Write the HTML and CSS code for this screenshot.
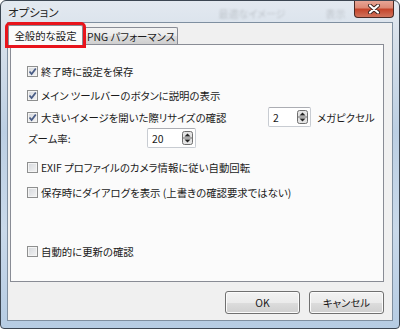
FILE: index.html
```html
<!DOCTYPE html>
<html>
<head>
  <title>オプション</title>
  <link rel="stylesheet" href="styles.css">
</head>
<body>
  <div class="window">
    <div class="titlebar">
      <span class="title">オプション</span>
      <span class="behind">最適なイメージ</span>
      <span class="behind behind-2">表示</span>
      <div class="close">
        <svg width="14" height="10" viewBox="0 0 14 10">
          <path d="M3 1.5 L11 8.5 M11 1.5 L3 8.5" stroke="#3b2420" stroke-width="4" stroke-linecap="round"/>
          <path d="M3 1.5 L11 8.5 M11 1.5 L3 8.5" stroke="#ffffff" stroke-width="2.2" stroke-linecap="round"/>
        </svg>
      </div>
    </div>
    <div class="frame-body">
      <div class="client">
        <div class="tabs">
          <div class="tab active">全般的な設定</div>
          <div class="tab">PNG パフォーマンス</div>
        </div>
        <div class="panel">
          <div class="row row-1">
            <span class="cb checked"><svg width="9" height="9" viewBox="0 0 9 9"><path d="M1.5 4.5 L3.6 7 L7.8 1.5" fill="none" stroke="#4a5d86" stroke-width="1.8"/></svg></span>
            <span class="label">終了時に設定を保存</span>
          </div>
          <div class="row row-2">
            <span class="cb checked"><svg width="9" height="9" viewBox="0 0 9 9"><path d="M1.5 4.5 L3.6 7 L7.8 1.5" fill="none" stroke="#4a5d86" stroke-width="1.8"/></svg></span>
            <span class="label">メイン ツールバーのボタンに説明の表示</span>
          </div>
          <div class="row row-3">
            <span class="cb checked"><svg width="9" height="9" viewBox="0 0 9 9"><path d="M1.5 4.5 L3.6 7 L7.8 1.5" fill="none" stroke="#4a5d86" stroke-width="1.8"/></svg></span>
            <span class="label wide">大きいイメージを開いた際リサイズの確認</span>
            <div class="spin spin-small">
              <span class="value">2</span>
              <span class="arrows">
                <svg width="11" height="14" viewBox="0 0 11 14">
                  <rect x="0.5" y="0.5" width="10" height="13" rx="2" fill="#e4e4e4" stroke="#6f6f6f"/>
                  <path d="M1 7 H10" stroke="#6f6f6f"/>
                  <path d="M2.5 5.5 L5.5 2.5 L8.5 5.5 Z" fill="#222"/>
                  <path d="M2.5 8.5 L5.5 11.5 L8.5 8.5 Z" fill="#222"/>
                </svg>
              </span>
            </div>
            <span class="unit">メガピクセル</span>
          </div>
          <div class="row row-zoom">
            <span class="label zoom-label">ズーム率:</span>
            <div class="spin spin-large">
              <span class="value">20</span>
              <span class="arrows">
                <svg width="11" height="14" viewBox="0 0 11 14">
                  <rect x="0.5" y="0.5" width="10" height="13" rx="2" fill="#e4e4e4" stroke="#6f6f6f"/>
                  <path d="M1 7 H10" stroke="#6f6f6f"/>
                  <path d="M2.5 5.5 L5.5 2.5 L8.5 5.5 Z" fill="#222"/>
                  <path d="M2.5 8.5 L5.5 11.5 L8.5 8.5 Z" fill="#222"/>
                </svg>
              </span>
            </div>
          </div>
          <div class="row row-exif">
            <span class="cb"></span>
            <span class="label">EXIF プロファイルのカメラ情報に従い自動回転</span>
          </div>
          <div class="row row-save">
            <span class="cb"></span>
            <span class="label">保存時にダイアログを表示 (上書きの確認要求ではない)</span>
          </div>
          <div class="row row-auto">
            <span class="cb"></span>
            <span class="label">自動的に更新の確認</span>
          </div>
        </div>
        <div class="buttons">
          <button class="btn">OK</button>
          <button class="btn">キャンセル</button>
        </div>
      </div>
    </div>
  </div>
</body>
</html>
```

FILE: styles.css
```css
body {
  margin: 0;
  font-family: "Noto Sans CJK JP", sans-serif;
  font-feature-settings: "palt";
  font-size: 10.4px;
  color: #1a1a1a;
  background-color: #ffffff;
}

.window {
  width: 398px;
  height: 327px;
  border: 1px solid #3c4652;
  border-radius: 6px 6px 4px 4px;
  background: linear-gradient(to bottom, #e3e9f0 0%, #d7e0ea 12%, #bccfe3 40%, #c9d9ea 70%, #b6cce3 100%);
  overflow: hidden;
}

.titlebar {
  height: 21px;
  display: flex;
  align-items: flex-start;
  white-space: nowrap;
}

.title {
  flex-shrink: 0;
  margin-left: 7px;
  margin-top: 3px;
  font-size: 11.5px;
  color: #222222;
  text-shadow: 0 0 6px #ffffff;
}

.behind {
  flex-shrink: 0;
  margin-left: 160px;
  margin-top: 5px;
  font-size: 10px;
  color: rgba(40, 40, 40, 0.18);
  filter: blur(1px);
}

.behind-2 {
  margin-left: 40px;
}

.close {
  flex-shrink: 0;
  margin-left: auto;
  margin-right: 5px;
  margin-top: -1px;
  width: 40px;
  height: 18px;
  box-sizing: border-box;
  border: 1px solid #4b2a24;
  border-top: none;
  border-radius: 0 0 4px 4px;
  background: linear-gradient(to bottom, #e9a99a 0%, #dc8a76 45%, #c5452b 55%, #d0735c 100%);
  display: flex;
  align-items: center;
  justify-content: center;
}

.frame-body {
  padding: 0 6px;
}

.client {
  height: 297px;
  border: 1px solid #7f8fa0;
  background-color: #f0f0f0;
  padding: 0 8px 0 2px;
  display: flex;
  flex-direction: column;
}

.tabs {
  display: flex;
  align-items: flex-end;
  height: 22px;
  margin-bottom: -1px;
  position: relative;
  z-index: 1;
  white-space: nowrap;
}

.tab {
  flex-shrink: 0;
  box-sizing: border-box;
  height: 17px;
  padding: 0 4px;
  border: 1px solid #898c95;
  border-bottom: none;
  border-radius: 2px 2px 0 0;
  background: linear-gradient(to bottom, #f3f3f3 0%, #ebebeb 50%, #dddddd 51%, #cfcfcf 100%);
  display: flex;
  align-items: center;
  margin-bottom: 1px;
}

.tab.active {
  height: 20px;
  width: 75px;
  margin-left: -2px;
  margin-right: -1px;
  margin-bottom: 0;
  justify-content: center;
  background: #fbfbfb;
  outline: 3px solid #e8141c;
  position: relative;
  z-index: 2;
}

.tab:not(.active) {
  width: 96px;
}

.panel {
  box-sizing: border-box;
  height: 238px;
  border: 1px solid #898c95;
  background-color: #fbfbfb;
  padding: 16px 0 0 16px;
}

.row {
  display: flex;
  align-items: center;
  height: 20px;
  white-space: nowrap;
}

.row-2 { margin-top: 4px; }
.row-3 { margin-top: 2px; }
.row-zoom { margin-top: 1px; }
.row-exif { margin-top: 9px; }
.row-save { margin-top: 5px; }
.row-auto { margin-top: 39px; }

.cb {
  box-sizing: border-box;
  width: 11px;
  height: 11px;
  border: 1px solid #8e8f8f;
  background: linear-gradient(135deg, #d4d7dc 0%, #f4f4f4 100%);
  box-shadow: inset 0 0 0 1px #f4f4f4;
  display: flex;
  align-items: center;
  justify-content: center;
  margin-right: 3px;
  flex-shrink: 0;
}

.cb svg {
  display: block;
}

.wide {
  width: 227px;
}

.zoom-label {
  width: 119px;
  margin-left: 1px;
}

.spin {
  box-sizing: border-box;
  height: 20px;
  border: 1px solid #c8ccd2;
  border-top-color: #abadb3;
  border-radius: 2px;
  background-color: #ffffff;
  display: flex;
  align-items: center;
  padding-left: 4px;
}

.spin-small { width: 43px; }
.spin-large { width: 49px; }

.spin .value {
  flex: 1;
}

.arrows {
  width: 11px;
  height: 14px;
  margin-right: 2px;
}

.arrows svg {
  display: block;
}

.unit {
  margin-left: 6px;
}

.buttons {
  display: flex;
  justify-content: flex-end;
  gap: 9px;
  margin-top: 9px;
}

.btn {
  width: 75px;
  height: 23px;
  border: 1px solid #707070;
  border-radius: 3px;
  background: linear-gradient(to bottom, #f2f2f2 0%, #ebebeb 50%, #dddddd 51%, #cfcfcf 100%);
  box-shadow: inset 0 0 0 1px #fbfbfb;
  font-family: "Noto Sans CJK JP", sans-serif;
  font-feature-settings: "palt";
  font-size: 10.4px;
  color: #1a1a1a;
  padding: 0;
}
```
